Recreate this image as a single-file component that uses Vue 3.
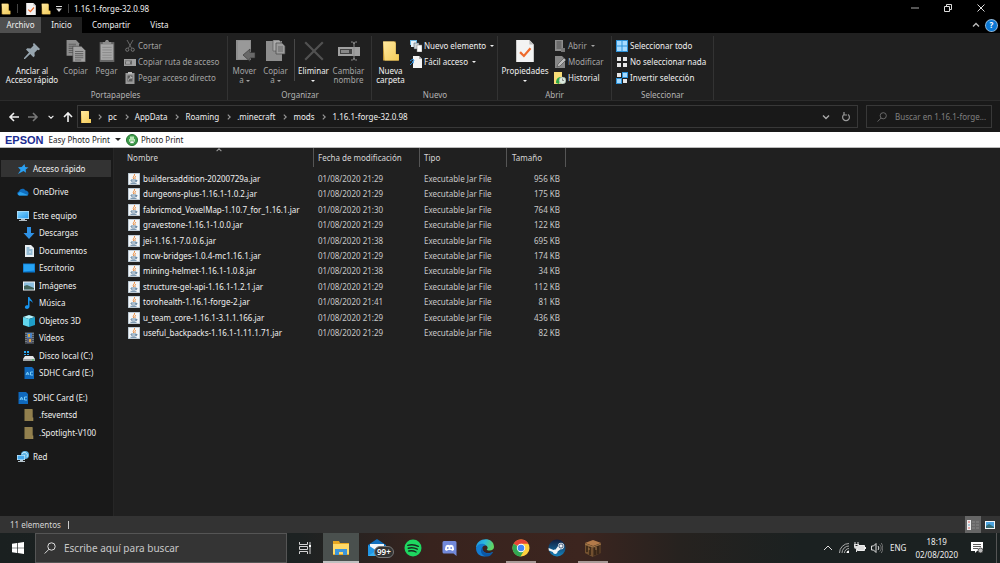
<script setup>
const tabs = ['Archivo', 'Inicio', 'Compartir', 'Vista']
const crumbs = ['pc', 'AppData', 'Roaming', '.minecraft', 'mods', '1.16.1-forge-32.0.98']

const tree = [
  { name: 'Acceso rápido', icon: 'star', selected: true },
  { name: 'OneDrive', icon: 'cloud' },
  {
    name: 'Este equipo',
    icon: 'pc',
    children: [
      { name: 'Descargas', icon: 'download' },
      { name: 'Documentos', icon: 'document' },
      { name: 'Escritorio', icon: 'desktop' },
      { name: 'Imágenes', icon: 'picture' },
      { name: 'Música', icon: 'music' },
      { name: 'Objetos 3D', icon: 'cube' },
      { name: 'Vídeos', icon: 'video' },
      { name: 'Disco local (C:)', icon: 'disk' },
      { name: 'SDHC Card (E:)', icon: 'sdcard' },
    ],
  },
  {
    name: 'SDHC Card (E:)',
    icon: 'sdcard',
    children: [
      { name: '.fseventsd', icon: 'dimfolder' },
      { name: '.Spotlight-V100', icon: 'dimfolder' },
    ],
  },
  { name: 'Red', icon: 'network' },
]

const files = [
  ['buildersaddition-20200729a.jar', '21:29', 956],
  ['dungeons-plus-1.16.1-1.0.2.jar', '21:29', 175],
  ['fabricmod_VoxelMap-1.10.7_for_1.16.1.jar', '21:30', 764],
  ['gravestone-1.16.1-1.0.0.jar', '21:29', 122],
  ['jei-1.16.1-7.0.0.6.jar', '21:38', 695],
  ['mcw-bridges-1.0.4-mc1.16.1.jar', '21:29', 174],
  ['mining-helmet-1.16.1-1.0.8.jar', '21:38', 34],
  ['structure-gel-api-1.16.1-1.2.1.jar', '21:29', 112],
  ['torohealth-1.16.1-forge-2.jar', '21:41', 81],
  ['u_team_core-1.16.1-3.1.1.166.jar', '21:29', 436],
  ['useful_backpacks-1.16.1-1.11.1.71.jar', '21:29', 82],
]

const apps = [
  { name: 'Explorador de archivos', icon: 'explorer', state: 'active' },
  { name: 'Correo', icon: 'mail', badge: '99+' },
  { name: 'Spotify', icon: 'spotify' },
  { name: 'Discord', icon: 'discord' },
  { name: 'Edge', icon: 'edge' },
  { name: 'Chrome', icon: 'chrome', state: 'open' },
  { name: 'Steam', icon: 'steam' },
  { name: 'Minecraft', icon: 'block', state: 'open' },
]
</script>

<template>
  <div class="screen">
    <svg class="defs" aria-hidden="true">
      <defs>
        <linearGradient id="gFolder" x1="0" y1="0" x2="1" y2="1">
          <stop offset="0" stop-color="#ffe9a0" /><stop offset="1" stop-color="#f3cb58" />
        </linearGradient>
        <linearGradient id="gScreen" x1="0" y1="0" x2="1" y2="1">
          <stop offset="0" stop-color="#7fd3ff" /><stop offset="1" stop-color="#2a9df0" />
        </linearGradient>
        <linearGradient id="gEdge" x1="0" y1="0" x2="1" y2="0.3">
          <stop offset="0" stop-color="#1c8fe0" /><stop offset="0.5" stop-color="#2bb8e0" /><stop offset="1" stop-color="#5fd564" />
        </linearGradient>
        <linearGradient id="gSteam" x1="0" y1="0" x2="0" y2="1">
          <stop offset="0" stop-color="#101d3e" /><stop offset="1" stop-color="#1583bd" />
        </linearGradient>
      </defs>
      <symbol id="folder" viewBox="0 0 12 14">
        <path d="M1 1h8v8h2v4H1z" fill="#d9a93c" /><path d="M1 1h7l1 1v7h2v4H2z" fill="url(#gFolder)" />
      </symbol>
      <symbol id="dimfolder" viewBox="0 0 12 14">
        <path d="M1 0h9v10h1v4H1z" fill="#a08c55" /><path d="M1 0h8l1 1v13H1z" fill="#92804e" />
      </symbol>
      <symbol id="check" viewBox="0 0 16 20">
        <path d="M0 0h12l4 4v16H0z" fill="#f3f3f3" /><path d="M12 0v4h4" fill="#bbb" />
        <path d="M3.500 11l3.500 3.500 6-7" fill="none" stroke="#ee6a2c" stroke-width="2" />
      </symbol>
      <symbol id="pin" viewBox="0 0 16 16">
        <path d="M10 0l6 6-1.200 1.200-1.300-.4-3 3 .2 3.200-1.300 1.200-3.200-3.200L1 16H0v-1l5-5.400L2 6.500l1.300-1.200 3.300.2 2.900-2.900-.6-1.500z" fill="#97a5af" />
      </symbol>
      <symbol id="copy" viewBox="0 0 18 21">
        <path d="M0 0h9l3 3v12H0z" fill="#8d8d8d" /><path d="M2 4h7M2 6h7M2 8h5M2 10h5M2 12h5" stroke="#606060" />
        <path d="M6 6h8l4 4v11H6z" fill="#a2a2a2" stroke="#444" stroke-width=".6" /><path d="M8 11h8M8 13h8M8 15h8M8 17h8M8 19h6" stroke="#666" />
      </symbol>
      <symbol id="paste" viewBox="0 0 16 21">
        <path d="M1 2h14v19H1z" fill="#666" /><path d="M2 4h12v15H2z" fill="#a8a8a8" />
        <path d="M4 4V2h2l1-2h2l1 2h2v2z" fill="#8c8c8c" /><path d="M3.500 7h9M3.500 9.500h9M3.500 12h9M3.500 14.500h9M3.500 17h9" stroke="#858585" stroke-width=".8" />
      </symbol>
      <symbol id="cut" viewBox="0 0 12 12">
        <path d="M3 0l4.500 8M9 0L4.500 8" stroke="#666" fill="none" />
        <circle cx="3.300" cy="9.700" r="1.600" fill="none" stroke="#777" /><circle cx="8.700" cy="9.700" r="1.600" fill="none" stroke="#777" />
      </symbol>
      <symbol id="path" viewBox="0 0 12 12">
        <path d="M0 3h12v7H0z" fill="#a0a0a0" /><path d="M1 4.500h7v4H1z" fill="#666" /><path d="M2 5l1 3 1-3 1 3 1-3" stroke="#ccc" stroke-width=".6" fill="none" />
      </symbol>
      <symbol id="shortcut" viewBox="0 0 12 12">
        <path d="M1.500 1h9v11h-9z" fill="#999" /><path d="M4 0h4v2H4z" fill="#bbb" /><path d="M3.500 3.500h5v6h-5z" fill="#5a5a5a" /><path d="M4.500 8.500c0-2 1-3 3-3M6 4.500l2 1-1.500 1.500" stroke="#ccc" stroke-width=".8" fill="none" />
      </symbol>
      <symbol id="moveto" viewBox="0 0 20 22">
        <path d="M1 0h15v20H1z" fill="#8e8e8e" /><path d="M3 1h12v18H3z" fill="#999" /><path d="M15 9v3.500h5V18h-5v3.500L8 15z" fill="#686868" stroke="#303030" stroke-width=".6" />
      </symbol>
      <symbol id="copyto" viewBox="0 0 20 22">
        <path d="M0 1h16v20H0z" fill="#8e8e8e" /><path d="M7 0h6l2 2v9H7z" fill="#aaa" stroke="#555" stroke-width=".6" />
        <path d="M10 3h6l3 3v8h-9z" fill="#9c9c9c" stroke="#484848" stroke-width=".7" /><path d="M12 7h5M12 9h5M12 11h5" stroke="#666" />
      </symbol>
      <symbol id="delete" viewBox="0 0 20 20"><path d="M2 2l16 16M18 2L2 18" stroke="#515151" stroke-width="2" /></symbol>
      <symbol id="rename" viewBox="0 0 22 20">
        <path d="M0 6h22v9H0z" fill="#a0a0a0" /><path d="M2 8h12v5H2z" fill="#444" /><path d="M3 9h8v3H3z" fill="#888" />
        <path d="M13 1c2 0 3 0 3 2 0-2 1-2 3-2M16 2v16M13 19c2 0 3 0 3-2 0 2 1 2 3 2" stroke="#8d8d8d" fill="none" />
      </symbol>
      <symbol id="newitem" viewBox="0 0 12 12">
        <path d="M0 0h7v5H0z" fill="#6bb4e0" /><path d="M1 1h5v6H1z" fill="#e8f3fa" /><path d="M4 3h5v6H4z" fill="#cfd6da" stroke="#456" stroke-width=".5" /><path d="M7 5h5v7H7z" fill="#fff" stroke="#777" stroke-width=".5" />
      </symbol>
      <symbol id="easy" viewBox="0 0 12 12">
        <path d="M3 0h6l3 3v9H3z" fill="#f4f4f4" /><path d="M9 0v3h3" fill="#b4b4b4" /><path d="M0 5l3-2 1 2-2 1 2 1M0 9l3-3" stroke="#2d8ad6" fill="none" />
      </symbol>
      <symbol id="open" viewBox="0 0 12 12">
        <path d="M1 0h8v11H1z" fill="#8d8d8d" /><path d="M2.500 2h5M2.500 4h5M2.500 6h5M2.500 8h5" stroke="#4c4c4c" /><path d="M7 8h4v4H7z" fill="#777" />
      </symbol>
      <symbol id="edit" viewBox="0 0 12 12"><path d="M1 0h7l3 3v9H1z" fill="#888" /><path d="M3 11l1-3 6-6 2 2-6 6z" fill="#bcbcbc" stroke="#444" stroke-width=".6" /></symbol>
      <symbol id="history" viewBox="0 0 12 12">
        <path d="M0 0h8v8h1v4H0z" fill="#f7dc77" /><path d="M2 11c0-4 2-6 5-6l-1 3-1 4z" fill="#2fa845" /><circle cx="8.500" cy="8.500" r="3.400" fill="#dceadf" stroke="#8b9c90" stroke-width=".5" /><path d="M8.500 6.500v2H10" stroke="#666" stroke-width=".7" fill="none" />
      </symbol>
      <symbol id="selall" viewBox="0 0 12 12"><path d="M0 0h12v12H0z" fill="#2d92d8" /><path d="M1 1h4.500v4.500H1zM6.500 1H11v4.500H6.500zM1 6.500h4.500V11H1zM6.500 6.500H11V11H6.500z" fill="#a5daff" /></symbol>
      <symbol id="selnone" viewBox="0 0 12 12"><path d="M1 1h4v4H1zM7 1h4v4H7zM1 7h4v4H1zM7 7h4v4H7z" fill="#e6e6e6" /></symbol>
      <symbol id="selinv" viewBox="0 0 12 12"><path d="M6 0h6v6H6zM0 6h6v6H0z" fill="#2d92d8" /><path d="M7 1h4v4H7zM1 7h4v4H1z" fill="#a5daff" /><path d="M1 1h4v4H1zM7 7h4v4H7z" fill="#e6e6e6" /></symbol>

      <symbol id="star" viewBox="0 0 12 12"><path d="M7.500 1l.7 3 3.300.6-2.800 1.900.3 3.300-2.500-1.900L1 11l2.600-4.100L1 4.300l3.700-.2z" fill="#2aa0f2" /></symbol>
      <symbol id="cloud" viewBox="0 0 12 12"><path d="M3 9.500C-.5 9.500-.3 6 2 5.600 2.500 2.500 7 1.500 8.500 4.500c2.800 0 4.400 3.800 1.500 5z" fill="#0f6cbd" /><path d="M2 9.500C0 8 1.500 6.500 3.500 6L11 9c-.5.500-1 .5-1.500.5z" fill="#2ba2ee" /></symbol>
      <symbol id="pc" viewBox="0 0 12 12"><path d="M0 1h12v8H0z" fill="#b8dff7" /><path d="M.7 1.700h10.600v6.500H.7z" fill="url(#gScreen)" /><path d="M4 9h4v1h2v1H2v-1h2z" fill="#b4bec4" /></symbol>
      <symbol id="download" viewBox="0 0 12 12"><path d="M4 0h4v6h3.500L6 12 .5 6H4z" fill="#2f92e6" /></symbol>
      <symbol id="document" viewBox="0 0 12 12"><path d="M2 0h6l3 3v9H2z" fill="#e9eff3" /><path d="M3.500 3h3M3.500 5h6M3.500 7h3M3.500 9h6M7.500 7h2" stroke="#3e86b5" /></symbol>
      <symbol id="desktop" viewBox="0 0 12 12"><path d="M0 1.500h12v9H0z" fill="#0a78cf" /><path d="M.7 2.200h10.600v6.300L.7 9.500z" fill="#28a4f5" /></symbol>
      <symbol id="picture" viewBox="0 0 12 12"><path d="M0 1.500h12v9H0z" fill="#eef2f4" /><path d="M1 2.500h10v7H1z" fill="#8cbfe0" /><path d="M1 6l3-1 7 3v1.500H1z" fill="#41635a" /></symbol>
      <symbol id="music" viewBox="0 0 12 12"><path d="M5 0h1.500c0 2 3.500 3 3 6-.3-1.300-1.500-2-3-2.500V9.500C6.500 13 1 12.500 2 9.700 2.500 8.300 4 8 5 8.300z" fill="#1794ee" /></symbol>
      <symbol id="cube" viewBox="0 0 12 12"><path d="M0 2l6-2 6 2-6 2z" fill="#b5f2fb" /><path d="M0 2l6 2v8l-6-2z" fill="#62d5ec" /><path d="M12 2L6 4v8l6-2z" fill="#1f9fc9" /></symbol>
      <symbol id="video" viewBox="0 0 12 12"><path d="M2 0h9v12H2z" fill="#43484d" /><path d="M3 1v10M10 1v10" stroke="#a7adb2" stroke-dasharray="1 1" /><path d="M4 1h5v5H4z" fill="#4a83c6" /><path d="M4 6h5v5H4z" fill="#5b5f78" /><path d="M5 2h2v3H5zM6 7h2v3H6z" fill="#d9a544" /></symbol>
      <symbol id="disk" viewBox="0 0 12 12"><path d="M1 1h2v2H1zM4 1h2v2H4zM1 4h2v1H1zM4 4h2v1H4z" fill="#29aaf4" /><path d="M2 6h8l2 3H0z" fill="#e5e7e8" /><path d="M0 9h12v2H0z" fill="#a2a8aa" /><path d="M9 10h2" stroke="#37c157" /></symbol>
      <symbol id="sdcard" viewBox="0 0 12 12"><path d="M1.500 0H9l2 2v10H1.500z" fill="#0f69bd" /><path d="M3 8l1.500-3L6 8M3.500 7h2M10 5H7.500v3H10" stroke="#7fd5ff" stroke-width=".9" fill="none" /></symbol>
      <symbol id="network" viewBox="0 0 12 12"><circle cx="8" cy="4" r="4" fill="#5fb6e8" /><path d="M5 3c1-2 3-2 4-1s2 2 1 4" stroke="#c6ecff" fill="none" /><path d="M0 4h8v5H0z" fill="#c4e5f7" /><path d="M.7 4.700h6.600v3.700H.7z" fill="#45a9ee" /><path d="M3 9h3v1h2v1H1v-1h2z" fill="#b8c6ce" /></symbol>
      <symbol id="jar" viewBox="0 0 12 12">
        <path d="M0 0h12v12H0z" fill="#a9bac6" /><path d="M.7.7h10.600v10.600H.7z" fill="#f3f6f8" />
        <path d="M6.500 1c1 1.500-2.500 2.500-.8 5M8 3c-1 1-1.500 1.500-.8 3" stroke="#e8812f" fill="none" stroke-width=".9" /><path d="M3 7h5c0 2-1 2-2.500 2S3 8.500 3 7zM8 7.300c1.500-.3 1.500 1.200 0 1.200M2.500 10.300h6" stroke="#517696" fill="none" stroke-width=".9" />
      </symbol>

      <symbol id="explorer" viewBox="0 0 18 16"><path d="M1 1h6l1 2h9v12H1z" fill="#e8a722" /><path d="M1 4h16v10H1z" fill="#ffd968" /><path d="M3 15V9h12v6h-4v-3H7v3z" fill="#3d95da" /></symbol>
      <symbol id="mail" viewBox="0 0 18 18"><path d="M0 6l9-6 9 6v11H0z" fill="#0f6fbe" /><path d="M2 5h14v8H2z" fill="#f0f7fb" /><path d="M0 6l9 6 9-6v11H0z" fill="#2196e5" /><path d="M0 17l9-6 9 6z" fill="#38afef" /></symbol>
      <symbol id="spotify" viewBox="0 0 18 18"><circle cx="9" cy="9" r="8.500" fill="#1ed760" /><path d="M3.800 6.300c3.500-1 7.500-.6 10.500 1M4.300 9.200c3-.8 6.300-.4 9 1M4.800 12c2.500-.6 5-.3 7.300 1" stroke="#162a20" stroke-width="1.400" fill="none" stroke-linecap="round" /></symbol>
      <symbol id="discord" viewBox="0 0 18 18"><path d="M4 2h11q1.500 0 1.500 1.500V17l-3-2.500H4q-1.500 0-1.500-1.500V3.500Q2.500 2 4 2z" fill="#7289da" /><path d="M5 11c0-2 .5-3.500 1-4.500l2-.7 1.500.4 1.500-.4 2 .7c.6 1 1 2.500 1 4.500l-2 1-.8-1H7.800l-.8 1z" fill="#fff" /><circle cx="7.800" cy="9" r=".9" fill="#7289da" /><circle cx="11.200" cy="9" r=".9" fill="#7289da" /></symbol>
      <symbol id="edge" viewBox="0 0 18 18"><path d="M0 9C0-2 18-3 18 8c0 3-3.500 4.500-7 3-.8-.4 1-1 .5-3C10.500 5 3 4 0 9z" fill="url(#gEdge)" /><path d="M0 9c1-4.500 8-5.500 10-2.500-3-.5-4.500 2-3.500 4.500 1.500 3.500 7 4 10.500 2C14 19 0 20 0 9z" fill="#137bd0" /><path d="M6.500 8C3 12 6 17.500 11 17.500c2.500 0 4.500-1.500 6-4.500-5 3-11 1-10.500-5z" fill="#0c58a5" /></symbol>
      <symbol id="chrome" viewBox="0 0 18 18"><circle cx="9" cy="9" r="8.500" fill="#ffd13e" /><path d="M9 9L1.600 4.700A8.500 8.500 0 0 1 16.400 4.800H9z" fill="#e74336" /><path d="M9 9L1.600 4.700A8.500 8.500 0 0 0 8.500 17.500L12.300 11z" fill="#32a753" /><circle cx="9" cy="9" r="4.200" fill="#fff" /><circle cx="9" cy="9" r="3.300" fill="#4285f4" /></symbol>
      <symbol id="steam" viewBox="0 0 18 18"><circle cx="9" cy="9" r="8.500" fill="url(#gSteam)" /><path d="M.6 9l5 2c.7-.5 1.300-.6 2-.6l2.300-3.200c0-5 6.600-4.300 6.300 0-.2 2-1.700 3.200-3.600 3.100l-3 2.200c0 3-4 3.400-4.800.6L.8 11.500z" fill="#f3f6f8" /><circle cx="13" cy="7" r="2.100" fill="#f3f6f8" stroke="#163258" stroke-width=".8" /></symbol>
      <symbol id="block" viewBox="0 0 18 18"><path d="M1 4l8-3 8 3v10l-8 4-8-4z" fill="#513823" /><path d="M1 4l8-3 8 3-8 3z" fill="#b37b4a" /><path d="M1 4l8 3v11l-8-4z" fill="#72502f" /><path d="M3 7v6M6 8v8M11 9v7M14 7v8" stroke="#332215" stroke-width="1.500" /><path d="M1 5l8 3 8-3M5 9v2M12 8v3" stroke="#a3784a" fill="none" /></symbol>
      <symbol id="lens" viewBox="0 0 12 12"><circle cx="7.500" cy="4.500" r="3.700" fill="none" stroke="currentColor" /><path d="M5 7.200L.7 11.500" stroke="currentColor" /></symbol>
      <symbol id="chev" viewBox="0 0 10 10"><path d="M2 3.500l3 3 3-3" stroke="currentColor" stroke-width="1.400" fill="none" /></symbol>
      <symbol id="back" viewBox="0 0 12 12"><path d="M11 6H2M6 2L2 6l4 4" stroke="currentColor" stroke-width="1.600" fill="none" /></symbol>
    </svg>

    <header class="titlebar">
      <div class="quick">
        <svg class="i12"><use href="#folder" /></svg><i class="bar"></i>
        <button aria-label="Propiedades"><svg class="i10"><use href="#check" /></svg></button>
        <button aria-label="Nueva carpeta"><svg class="i12"><use href="#folder" /></svg></button>
        <button aria-label="Personalizar"><svg class="i6" viewBox="0 0 6 6"><path d="M0 0h6v1H0zM0 2.500h6L3 6z" fill="#ddd" /></svg></button>
        <i class="bar"></i>
      </div>
      <h1>1.16.1-forge-32.0.98</h1>
      <div class="winbtns">
        <button aria-label="Minimizar"><svg class="i8" viewBox="0 0 8 8"><path d="M0 4h8" stroke="#aaa" /></svg></button>
        <button aria-label="Restaurar"><svg class="i8" viewBox="0 0 8 8"><path d="M.5 2.500h5v5h-5zM2.500 2V.5h5v5H6" stroke="#ddd" fill="none" /></svg></button>
        <button aria-label="Cerrar"><svg class="i8" viewBox="0 0 8 8"><path d="M.5.5l7 7M7.500.5l-7 7" stroke="#ddd" /></svg></button>
      </div>
    </header>

    <nav class="tabs">
      <button v-for="(t, n) in tabs" :key="t" :class="{ file: n === 0, on: n === 1 }">{{ t }}</button>
      <div class="tabs-end">
        <button aria-label="Contraer la cinta"><svg class="i10 flip"><use href="#chev" /></svg></button>
        <button class="help" aria-label="Ayuda">?</button>
      </div>
    </nav>

    <section class="ribbon">
      <div class="group g1">
        <div class="tools">
          <button class="big wide"><svg class="i16"><use href="#pin" /></svg><span>Anclar al<br />Acceso rápido</span></button>
          <button class="big dim"><svg class="i22"><use href="#copy" /></svg><span>Copiar</span></button>
          <button class="big dim"><svg class="i22"><use href="#paste" /></svg><span>Pegar</span></button>
          <div class="stack dim">
            <button><svg class="i12"><use href="#cut" /></svg>Cortar</button>
            <button><svg class="i12"><use href="#path" /></svg>Copiar ruta de acceso</button>
            <button><svg class="i12"><use href="#shortcut" /></svg>Pegar acceso directo</button>
          </div>
        </div>
        <h2>Portapapeles</h2>
      </div>
      <div class="group g2">
        <div class="tools">
          <button class="big dim"><svg class="i22"><use href="#moveto" /></svg><span>Mover<br />a <i class="tri"></i></span></button>
          <button class="big dim"><svg class="i22"><use href="#copyto" /></svg><span>Copiar<br />a <i class="tri"></i></span></button>
          <i class="split"></i>
          <button class="big mid"><svg class="i22"><use href="#delete" /></svg><span>Eliminar<br /><i class="tri"></i></span></button>
          <button class="big mid dim"><svg class="i22"><use href="#rename" /></svg><span>Cambiar<br />nombre</span></button>
        </div>
        <h2>Organizar</h2>
      </div>
      <div class="group g3">
        <div class="tools">
          <button class="big mid"><svg class="i22"><use href="#folder" /></svg><span>Nueva<br />carpeta</span></button>
          <div class="stack">
            <button><svg class="i12"><use href="#newitem" /></svg>Nuevo elemento <i class="tri"></i></button>
            <button><svg class="i12"><use href="#easy" /></svg>Fácil acceso <i class="tri"></i></button>
          </div>
        </div>
        <h2>Nuevo</h2>
      </div>
      <div class="group g4">
        <div class="tools">
          <button class="big wide"><svg class="i22"><use href="#check" /></svg><span>Propiedades<br /><i class="tri"></i></span></button>
          <div class="stack">
            <button class="dim"><svg class="i12"><use href="#open" /></svg>Abrir <i class="tri"></i></button>
            <button class="dim"><svg class="i12"><use href="#edit" /></svg>Modificar</button>
            <button><svg class="i12"><use href="#history" /></svg>Historial</button>
          </div>
        </div>
        <h2>Abrir</h2>
      </div>
      <div class="group g5">
        <div class="tools">
          <div class="stack">
            <button><svg class="i12"><use href="#selall" /></svg>Seleccionar todo</button>
            <button><svg class="i12"><use href="#selnone" /></svg>No seleccionar nada</button>
            <button><svg class="i12"><use href="#selinv" /></svg>Invertir selección</button>
          </div>
        </div>
        <h2>Seleccionar</h2>
      </div>
    </section>

    <section class="address">
      <div class="arrows">
        <button aria-label="Atrás"><svg class="i12"><use href="#back" /></svg></button>
        <button class="off" aria-label="Adelante"><svg class="i12 mirror"><use href="#back" /></svg></button>
        <button aria-label="Ubicaciones recientes"><svg class="i8"><use href="#chev" /></svg></button>
        <button aria-label="Subir"><svg class="i12 up"><use href="#back" /></svg></button>
      </div>
      <div class="crumbs">
        <svg class="i14"><use href="#folder" /></svg>
        <template v-for="c in crumbs" :key="c">
          <svg class="i8 right"><use href="#chev" /></svg>
          <a href="#">{{ c }}</a>
        </template>
        <button class="drop" aria-label="Historial"><svg class="i10"><use href="#chev" /></svg></button>
        <button class="reload" aria-label="Actualizar"><svg class="i10" viewBox="0 0 10 10"><path d="M3 2.500a3.400 3.400 0 1 0 4 0M3 0v3h3" stroke="#9a9a9a" stroke-width="1.200" fill="none" /></svg></button>
      </div>
      <label class="find">
        <svg class="i10"><use href="#lens" /></svg>
        <input type="text" aria-label="Buscar" placeholder="Buscar en 1.16.1-forge..." />
      </label>
    </section>

    <section class="epson">
      <strong>EPSON</strong>
      <button>Easy Photo Print <i class="tri"></i></button>
      <button class="photo"><svg class="i12" viewBox="0 0 12 12"><circle cx="6" cy="6" r="5.500" fill="#3e9f4c" stroke="#26712f" /><path d="M3 5h6v3H3zM4 2.500h4V5H4z" fill="#b9e6b4" /><path d="M4 7h4v2.500H4z" fill="#fff" stroke="#2c7a36" stroke-width=".5" /></svg>Photo Print</button>
    </section>

    <main class="body">
      <nav class="side">
        <ul>
          <li v-for="(n, k) in tree" :key="k">
            <a href="#" :class="{ sel: n.selected }"><svg class="i12"><use :href="'#' + n.icon" /></svg>{{ n.name }}</a>
            <ul v-if="n.children" class="sub">
              <li v-for="c in n.children" :key="c.name"><a href="#"><svg class="i12"><use :href="'#' + c.icon" /></svg>{{ c.name }}</a></li>
            </ul>
          </li>
        </ul>
      </nav>
      <div class="list">
        <table>
          <colgroup><col class="c-name" /><col class="c-date" /><col class="c-type" /><col class="c-size" /></colgroup>
          <thead>
            <tr>
              <th><div>Nombre<svg class="sort i8 flip"><use href="#chev" /></svg></div></th>
              <th><div>Fecha de modificación</div></th>
              <th><div>Tipo</div></th>
              <th><div>Tamaño</div></th>
            </tr>
          </thead>
          <tbody>
            <tr v-for="f in files" :key="f[0]">
              <td><a href="#"><svg class="i12"><use href="#jar" /></svg>{{ f[0] }}</a></td>
              <td>01/08/2020 {{ f[1] }}</td>
              <td>Executable Jar File</td>
              <td>{{ f[2] }} KB</td>
            </tr>
          </tbody>
        </table>
      </div>
    </main>

    <footer class="status">
      <span>11 elementos</span><i></i>
      <div class="views">
        <button class="on" aria-label="Detalles"><svg class="i12" viewBox="0 0 12 12"><path d="M0 1h4v10H0z" fill="#eee" /><path d="M1 3h2M1 9h2" stroke="#d66" /><path d="M1 6h2" stroke="#69b" /><path d="M5 3h3M9 3h3M5 6h3M9 6h3M5 9h3M9 9h3" stroke="#888" /></svg></button>
        <button aria-label="Iconos grandes"><svg class="i10" viewBox="0 0 10 10"><path d="M0 1h10v8H0z" fill="#f2f6f9" /><path d="M1 2h8v6H1z" fill="#4ba3e0" /><path d="M1 6l3-2 5 3v1H1z" fill="#356b74" /></svg></button>
      </div>
    </footer>

    <footer class="taskbar">
      <button class="start" aria-label="Inicio"><svg class="i12" viewBox="0 0 12 12"><path d="M0 1.800l5-.8v4.700H0zM5.700.9L12 0v5.700H5.700zM0 6.300h5V11l-5-.8zM5.700 6.300H12V12l-6.300-.9z" fill="#fff" /></svg></button>
      <label class="cortana">
        <svg class="i12"><use href="#lens" /></svg>
        <input type="text" aria-label="Buscar en Windows" placeholder="Escribe aquí para buscar" />
      </label>
      <button class="taskview" aria-label="Vista de tareas"><svg class="i12" viewBox="0 0 12 12"><path d="M.5 0v2.500h8V0M.5 12V9.500h8V12M.5 4.500h8v3h-8zM11 0v12" stroke="#d4d4d4" fill="none" /><path d="M10 3h2v2h-2z" fill="#fff" /></svg></button>
      <button v-for="a in apps" :key="a.name" class="app" :class="a.state" :aria-label="a.name">
        <svg class="i18"><use :href="'#' + a.icon" /></svg>
        <span v-if="a.badge" class="badge">{{ a.badge }}</span>
      </button>
      <div class="tray">
        <button aria-label="Mostrar iconos ocultos"><svg class="i12" viewBox="0 0 12 12"><path d="M2 8l4-4 4 4" stroke="#ddd" fill="none" /></svg></button>
        <button aria-label="Red"><svg class="i10" viewBox="0 0 10 10"><path d="M.5 10A9.500 9.500 0 0 1 10 .5M3 10a7 7 0 0 1 7-7M5.500 10A4.500 4.500 0 0 1 10 5.500" stroke="#aaa" fill="none" /><path d="M7.500 10A2.500 2.500 0 0 1 10 7.500V10z" fill="#fff" /></svg></button>
        <button aria-label="Batería"><svg class="i12" viewBox="0 0 12 12"><path d="M3.500 3.500h7v5h-7z" fill="#ddd" stroke="#eee" /><path d="M11 5h1v2h-1z" fill="#eee" /><path d="M0 2h5v3q0 2-2.500 2T0 5z" fill="#ddd" /><path d="M1 0v2M4 0v2M2.500 7v3" stroke="#ddd" /><path d="M1.500 3.500h2" stroke="#222" /></svg></button>
        <button aria-label="Volumen"><svg class="i12" viewBox="0 0 12 12"><path d="M.5 4h2L5 1.500v9L2.500 8h-2zM7 4c1 1 1 3 0 4" stroke="#ddd" fill="none" /><path d="M8.700 2.500c2 2 2 5 0 7M10.300 1c2 3 2 7 0 10" stroke="#888" fill="none" stroke-width=".8" /></svg></button>
        <button class="lang">ENG</button>
        <button class="clock"><time>18:19</time><time>02/08/2020</time></button>
        <button class="note" aria-label="Notificaciones"><svg class="i12" viewBox="0 0 12 12"><path d="M0 0h12v9H6l-2 2V9H0z" fill="#fff" /><path d="M2 2.500h8M2 4.500h8M2 6.500h5" stroke="#333" stroke-width=".8" /><circle cx="9.500" cy="8.500" r="2.500" fill="#bbb" stroke="#222" stroke-width=".7" /></svg></button>
      </div>
    </footer>
  </div>
</template>

<style>
body { background: #000; }
</style>

<style scoped>
* { box-sizing: border-box; margin: 0; padding: 0; }
.screen { min-height: 100vh; display: flex; flex-direction: column; background: #202020; color: #f0f0f0; font: 8px/12px "Noto Sans", "Open Sans", sans-serif; }
.defs { position: absolute; width: 0; height: 0; }
svg { display: block; flex: none; }
button { background: none; border: 0; color: inherit; font: inherit; display: flex; align-items: center; justify-content: center; white-space: nowrap; }
a { color: inherit; text-decoration: none; white-space: nowrap; }
h1, h2 { font: inherit; }
ul { list-style: none; }
input { background: none; border: 0; outline: 0; font: inherit; color: inherit; min-width: 0; flex: 1; }
.i6 { width: 6px; height: 6px; }
.i8 { width: 8px; height: 8px; }
.i10 { width: 10px; height: 12px; }
.i12 { width: 12px; height: 12px; }
.i14 { width: 12px; height: 14px; }
.i16 { width: 16px; height: 22px; }
.i18 { width: 18px; height: 18px; }
.i22 { width: 22px; height: 22px; }
.flip { transform: rotate(180deg); }
.mirror { transform: rotate(180deg); }
.up { transform: rotate(90deg); }
.right { transform: rotate(-90deg); }
.tri { display: inline-block; border: 2px solid transparent; border-top-color: currentColor; border-bottom: 0; vertical-align: middle; }

.titlebar { display: flex; align-items: center; height: 17px; background: #000; }
.quick { display: flex; align-items: center; gap: 4px; }
.bar { width: 1px; height: 9px; background: #444; margin: 0 4px 0 1px; }
.quick .bar:last-child { margin: 0 0 0 2px; }
.titlebar h1 { margin-left: 5px; }
.winbtns { margin-left: auto; display: flex; padding: 0 3px 2px 0; }
.winbtns button { width: 33px; height: 15px; }

.tabs { display: flex; height: 16px; background: #000; }
.tabs button { padding: 0 10px; }
.tabs .file { width: 41px; background: #4f4f4f; padding: 0; }
.tabs .on { width: 41px; background: #202020; padding: 0; }
.tabs-end { margin-left: auto; display: flex; align-items: center; gap: 5px; padding-right: 3px; color: #bbb; }
.tabs-end button { padding: 0; }
.tabs .help { width: 11px; height: 11px; border-radius: 50%; background: #0b78d4; color: #fff; box-shadow: 0 0 0 1px #8fb9dd; font-weight: 700; }

.ribbon { display: flex; height: 68px; padding-top: 3px; border-bottom: 1px solid #2b2b2b; }
.group { display: flex; flex-direction: column; border-right: 1px solid #333; }
.group h2 { text-align: center; color: #b4b4b4; margin-top: auto; line-height: 10px; }
.tools { display: flex; align-items: flex-start; height: 52px; }
.g1 { width: 228px; padding-left: 4px; }
.g2 { width: 144px; padding-left: 1px; }
.g3 { width: 126px; padding-left: 1px; }
.g4 { width: 114px; }
.g5 { width: 102px; }
.big { flex-direction: column; justify-content: flex-start; width: 31px; padding-top: 4px; gap: 4px; line-height: 9px; }
.big.wide { width: 54px; }
.g1 .big.wide { width: 56px; }
.big.mid { width: 35px; }
.big span { display: block; }
.dim { color: #a4a4a4; }
.split { width: 1px; height: 42px; background: #484848; margin: 3px 1px 0 3px; }
.stack { display: flex; flex-direction: column; padding: 2px 0 0 2px; }
.stack button { height: 16px; justify-content: flex-start; gap: 2px; }
.stack .tri { margin-left: 2px; }
.g5 .stack { padding-left: 4px; }

.address { display: flex; align-items: center; height: 31px; background: #191919; padding: 0 8px; }
.arrows { display: flex; align-items: center; width: 69px; justify-content: space-between; padding-right: 3px; }
.arrows .off { color: #777; }
.crumbs { flex: 1; display: flex; align-items: center; gap: 4px; height: 23px; border: 1px solid #383838; padding-left: 2px; }
.crumbs a { margin-right: 2px; }
.crumbs .right { color: #999; }
.drop { margin-left: auto; color: #aaa; }
.reload { width: 22px; }
.find { display: flex; align-items: center; gap: 8px; width: 126px; height: 23px; margin-left: 8px; border: 1px solid #383838; padding: 0 2px 0 10px; color: #777; }
.find input::placeholder { color: #808080; opacity: 1; }

.epson { display: flex; align-items: center; height: 16px; background: #fff; color: #222; padding-left: 5px; border-bottom: 1px solid #bbb; }
.epson strong { font: bold 11px/14px "Liberation Sans", sans-serif; color: #1c2c92; }
.epson button { margin-left: 5px; gap: 5px; }
.epson .tri { border-width: 3px 3px 0; }
.epson .photo { gap: 3px; }

.body { flex: 1; display: flex; align-items: stretch; }
.side { width: 114px; background: #191919; border-right: 1px solid #262626; padding: 12px 2px 0 1px; }
.side > ul > li { margin-bottom: 6px; }
.side > ul > li:nth-child(n + 2) { margin-bottom: 7px; }
.side a { display: flex; align-items: center; gap: 4px; height: 17px; padding-left: 16px; }
.side .sub a { padding-left: 22px; }
.side .sub li:nth-child(odd) a { height: 18px; }
.side .sel { background: #333; }

.list { flex: 1; min-width: 0; }
table { table-layout: fixed; border-collapse: collapse; width: 452px; }
.c-name { width: 200px; }
.c-date { width: 106px; }
.c-type { width: 87px; }
.c-size { width: 59px; }
th { height: 23px; font-weight: 400; text-align: left; vertical-align: top; color: #d6d6d6; }
th div { position: relative; height: 19px; line-height: 19px; padding-left: 4px; border-right: 1px solid #555; }
th:first-child div { padding-left: 13px; }
.sort { position: absolute; left: 101px; top: -2px; color: #999; }
th:nth-child(4) div { padding-left: 5px; }
td { height: 15px; color: #c8c8c8; padding-left: 4px; white-space: nowrap; }
tr:nth-child(5n + 2) td, tr:nth-child(5n + 4) td { height: 16px; }
td:first-child { color: #f0f0f0; padding-left: 14px; }
td:last-child { text-align: right; padding-right: 6px; }
td a { display: flex; align-items: center; gap: 3px; }

.status { display: flex; align-items: center; height: 17px; background: #333; color: #d6d6d6; padding: 0 5px 0 10px; }
.status > i { width: 1px; height: 8px; background: #ccc; margin-left: 7px; }
.views { margin-left: auto; display: flex; align-items: center; gap: 4px; }
.views .on { background: #666; width: 16px; height: 17px; }

.taskbar { display: flex; height: 30px; background: linear-gradient(90deg, #1a2020 0, #1d2222 30%, #38231e 43%, #3c251f 58%, #26221f 68%, #1b2121 80%); }
.start { width: 35px; }
.cortana { display: flex; align-items: center; gap: 8px; width: 252px; background: #343434; border: 1px solid #555; padding-left: 8px; font-size: 10px; color: #ddd; }
.cortana input::placeholder { color: #c8c8c8; opacity: 1; }
.taskview { width: 36px; }
.app { position: relative; width: 36px; }
.app.active { background: #4a504e; border-bottom: 2px solid #c0c0c0; padding-top: 2px; }
.app.open { background: linear-gradient(#a89a97, #a89a97) bottom / 30px 2px no-repeat; }
.badge { position: absolute; left: 15px; top: 13px; height: 12px; padding: 0 2px; border-radius: 6px; border: 1px solid #777; background: #333; color: #fff; font-weight: 600; line-height: 10px; }
.tray { margin-left: auto; display: flex; align-items: center; gap: 5px; border-right: 1px solid #555; margin-right: 3px; color: #f0f0f0; }
.lang { margin-left: 2px; }
.clock { flex-direction: column; line-height: 13px; margin-left: 4px; }
.note { padding: 0 13px 0 8px; }
</style>
